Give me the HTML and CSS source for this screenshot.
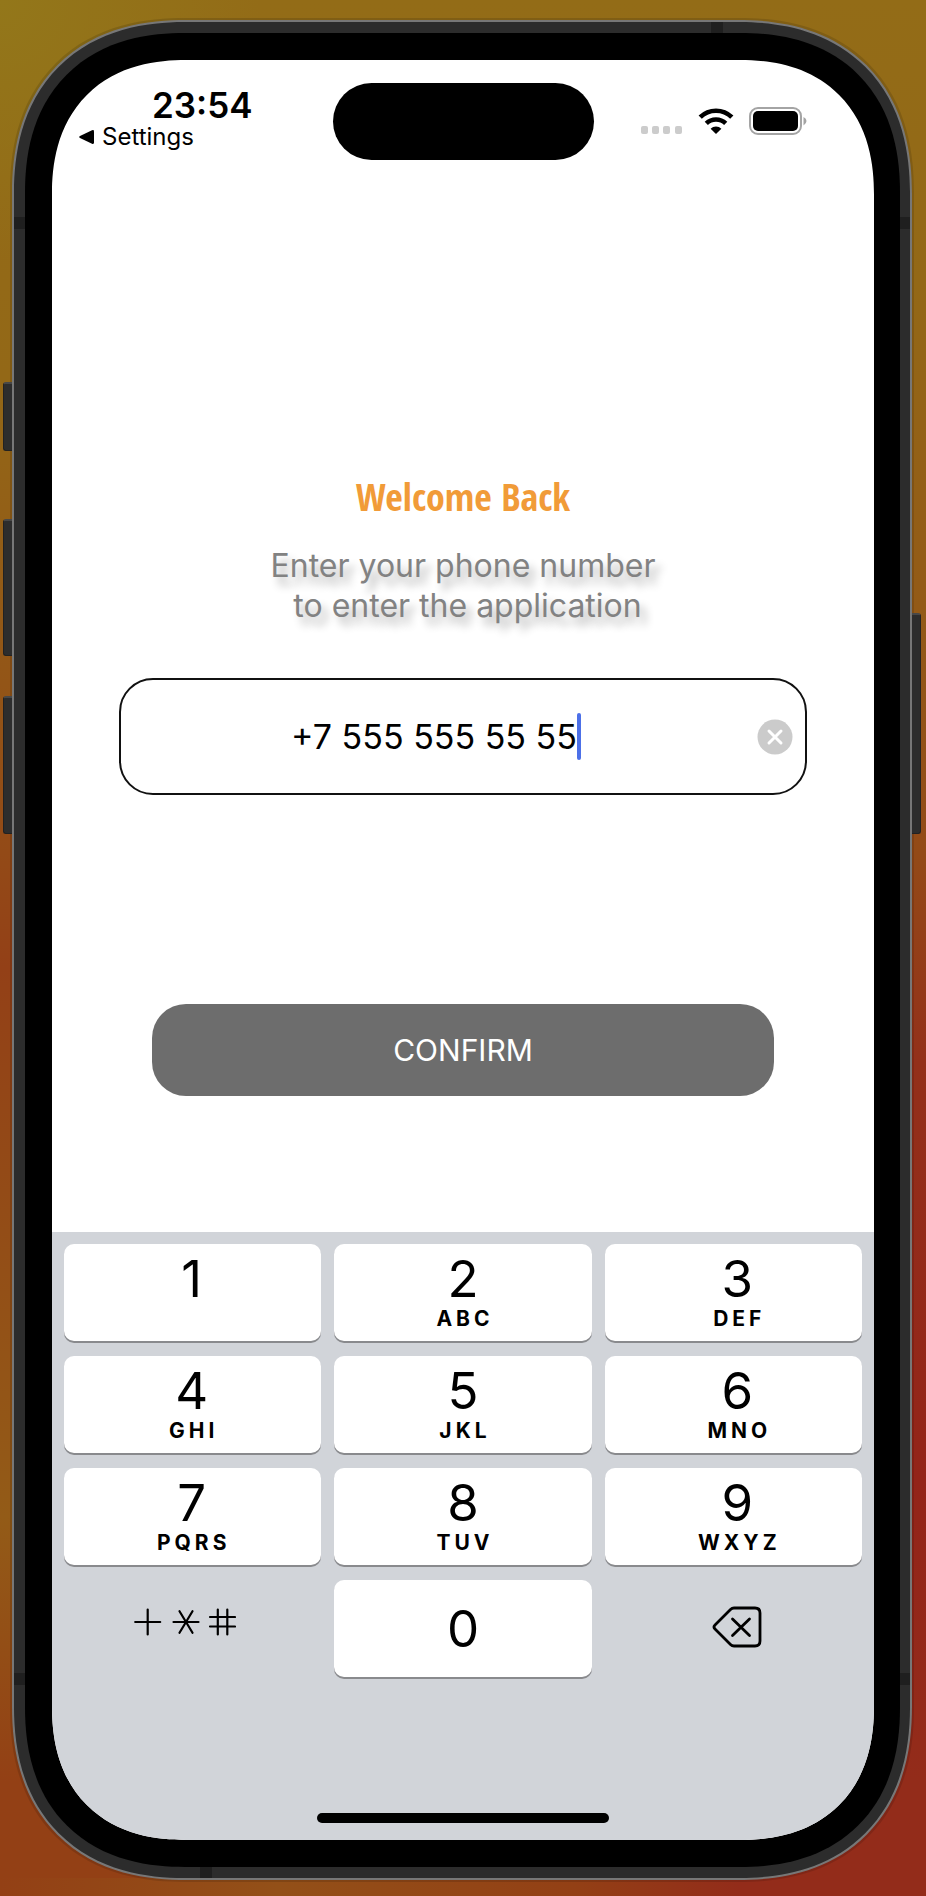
FILE: index.html
```html
<!DOCTYPE html>
<html lang="en">
<head>
<meta charset="utf-8">
<meta name="viewport" content="width=device-width, initial-scale=1">
<title>Welcome Back</title>
<link rel="stylesheet" href="styles.css">
</head>
<body>
<div class="phone">
  <span class="side side-mute"></span>
  <span class="side side-up"></span>
  <span class="side side-down"></span>
  <span class="side side-power"></span>
  <span class="seam seam-top"></span>
  <span class="seam seam-bottom"></span>
  <span class="seam seam-left-high"></span>
  <span class="seam seam-left-low"></span>
  <span class="seam seam-right-high"></span>
  <span class="seam seam-right-low"></span>
  <div class="bezel">
    <div class="screen">
      <header class="status">
        <div class="status-left">
          <time class="clock">23:54</time>
          <a class="back" href="#settings">
            <svg width="15" height="16" viewBox="0 0 15 16" aria-hidden="true"><path d="M13 1.2Q15 .4 15 2.4V13.6Q15 15.6 13 14.8L1 9Q-.6 8 1 7Z"/></svg>
            Settings
          </a>
        </div>
        <div class="island"></div>
        <div class="status-right">
          <svg class="dots" width="42" height="8" viewBox="0 0 42 8" aria-hidden="true"><g fill="#ccc"><rect width="7" height="8" rx="2"/><rect x="11" width="7" height="8" rx="2"/><rect x="22" width="7" height="8" rx="2"/><rect x="34" width="7" height="8" rx="2"/></g></svg>
          <svg width="36" height="28" viewBox="0 0 36 28" aria-hidden="true"><g fill="none" stroke="#000" stroke-width="4.6"><path d="M2.2 10.2A22.6 22.6 0 0 1 33.8 10.2"/><path d="M8.3 16.4A14 14 0 0 1 27.7 16.4"/></g><path d="M18 27 12.6 21.7A7.6 7.6 0 0 1 23.4 21.7Z"/></svg>
          <svg width="58" height="28" viewBox="0 0 58 28" aria-hidden="true"><rect x="1" y="1" width="51" height="26" rx="8" fill="none" stroke="#a4a4a4" stroke-width="2"/><rect x="4" y="4" width="45" height="20" rx="5"/><path d="M54.500 10Q57.500 11.500 57.500 14T54.500 18.500Z" fill="#a4a4a4"/></svg>
        </div>
      </header>
      <main class="login">
        <h1 class="title">Welcome Back</h1>
        <p class="hint">Enter your phone number<br>&nbsp;to enter the application</p>
        <form class="form">
          <div class="field">
            <input class="phone-input" type="tel" aria-label="Phone number" value="+7 555 555 55 55">
            <span class="caret"></span>
            <button class="clear" type="button" aria-label="Clear">
              <svg width="36" height="36" viewBox="0 0 36 36" aria-hidden="true"><circle cx="18" cy="18" r="17.500" fill="#cbcbcb"/><path d="M12 12 24 24M24 12 12 24" stroke="#fff" stroke-width="3" stroke-linecap="round"/></svg>
            </button>
          </div>
          <button class="confirm" type="button">CONFIRM</button>
        </form>
      </main>
      <section class="keyboard" aria-label="Keypad">
        <div class="keys">
          <button class="key" type="button">1<span class="letters">&nbsp;</span></button>
          <button class="key" type="button">2<span class="letters">ABC</span></button>
          <button class="key" type="button">3<span class="letters">DEF</span></button>
          <button class="key" type="button">4<span class="letters">GHI</span></button>
          <button class="key" type="button">5<span class="letters">JKL</span></button>
          <button class="key" type="button">6<span class="letters">MNO</span></button>
          <button class="key" type="button">7<span class="letters">PQRS</span></button>
          <button class="key" type="button">8<span class="letters">TUV</span></button>
          <button class="key" type="button">9<span class="letters">WXYZ</span></button>
          <button class="key key-plain key-symbols" type="button" aria-label="Symbols">
            <svg width="102" height="28" viewBox="0 0 102 28" aria-hidden="true"><g fill="none" stroke="#000" stroke-width="2.200" stroke-linecap="round"><path d="M1.200 14H26.200M13.700 1.500V26.500"/><path d="M39.500 14H64.500M45.500 3.200 58.500 24.800M58.500 3.200 45.500 24.800"/><path d="M76 9H101M76 18.500H101M83.800 1.500V26.500M93.300 1.500V26.500"/></g></svg>
          </button>
          <button class="key" type="button">0</button>
          <button class="key key-plain key-delete" type="button" aria-label="Delete">
            <svg width="50" height="42" viewBox="0 0 50 42" aria-hidden="true"><g fill="none" stroke="#000" stroke-width="2.800" stroke-linecap="round" stroke-linejoin="round"><path d="M22 2H43Q48 2 48 7V35Q48 40 43 40H22Q20 40 18.500 38.500L3 23Q1 21 3 19L18.500 3.500Q20 2 22 2Z"/><path d="M20.500 13 37.500 29.500M37.500 13 20.500 29.500"/></g></svg>
          </button>
        </div>
        <span class="home-bar"></span>
      </section>
    </div>
  </div>
</div>
</body>
</html>
```
FILE: styles.css
```css
* {
  box-sizing: border-box;
}

body {
  margin: 0;
  min-height: 100vh;
  display: flex;
  padding: 20px 14px 16px 12px;
  font-family: Inter, "Liberation Sans", sans-serif;
  color: #000;
  background:
    linear-gradient(90deg, #934015 0, #935018 30%, #934015 62%, #932c1a 80%) left bottom / 100% 18px no-repeat,
    radial-gradient(circle at 0 0, #93771a 0, rgba(147, 119, 26, 0) 260px) left top / 100% 300px no-repeat,
    linear-gradient(180deg, #936c17 0, #936817 20%, #935a17 32%, #934a17 45%, #934017 51%, #935b17 80%, #934015 94%) left top / 50% 100% no-repeat,
    linear-gradient(180deg, #936c17 0, #936817 15%, #935a17 32%, #934a17 45%, #93301a 56%, #932419 78%, #932c1a 94%) right top / 50% 100% no-repeat;
}

button,
input {
  font: inherit;
  color: inherit;
  margin: 0;
  padding: 0;
  border: 0;
  background: none;
}

.phone {
  position: relative;
  flex: 1;
  display: flex;
  padding: 11px 10px 11px 11px;
  border: 2px solid #777;
  border-radius: 156px;
  background: #2c2c2c;
  box-shadow: 0 0 0 2px rgba(0, 0, 0, 0.13);
}

.side {
  position: absolute;
  left: -11px;
  width: 9px;
  border: 1px solid #222;
  border-right: 0;
  border-top: 2px solid #484848;
  border-radius: 3px 0 0 3px;
  background: #2d2d2d;
}

.side-mute {
  top: 360px;
  height: 69px;
}

.side-up {
  top: 497px;
  height: 137px;
}

.side-down {
  top: 674px;
  height: 138px;
}

.side-power {
  left: auto;
  right: -11px;
  top: 591px;
  height: 221px;
  transform: scaleX(-1);
}

.seam {
  position: absolute;
  width: 11px;
  height: 12px;
  background: #1f1f1f;
}

.seam-top {
  top: 0;
  right: 187px;
  width: 12px;
}

.seam-bottom {
  bottom: 0;
  left: 186px;
  width: 12px;
}

.seam-left-high {
  left: 0;
  top: 195px;
}

.seam-left-low {
  left: 0;
  bottom: 193px;
}

.seam-right-high {
  right: 0;
  top: 195px;
}

.seam-right-low {
  right: 0;
  bottom: 193px;
}

.bezel {
  position: relative;
  flex: 1;
  display: flex;
  padding: 27px 26px 27px 27px;
  border-radius: 143px;
  background: #000;
}

.screen {
  flex: 1;
  min-width: 0;
  display: flex;
  flex-direction: column;
  overflow: hidden;
  border-radius: 118px;
  background: #fff;
}

@supports (corner-shape: superellipse(1.2)) {
  .phone,
  .bezel,
  .screen {
    corner-shape: superellipse(1.2);
  }

  .phone {
    border-radius: 174px;
  }

  .bezel {
    border-radius: 160px;
  }

  .screen {
    border-radius: 134px;
  }
}

.status {
  display: grid;
  grid-template-columns: 1fr 261px 1fr;
  padding-top: 23px;
}

.status-left {
  display: flex;
  flex-direction: column;
  align-items: flex-start;
  padding: 4px 0 0 27px;
}

.clock {
  margin-left: 73px;
  font-size: 35px;
  line-height: 36px;
  font-weight: 600;
}

.back {
  display: flex;
  align-items: center;
  gap: 8px;
  color: inherit;
  font-size: 24px;
  line-height: 28px;
  font-weight: 400;
  text-decoration: none;
}

.island {
  height: 77px;
  border-radius: 39px;
  background: #000;
}

.status-right {
  display: flex;
  align-items: center;
  justify-content: flex-end;
  gap: 15px;
  height: 75px;
  padding-right: 67px;
}

.dots {
  margin-top: 18px;
}

.login {
  flex: 1;
  display: flex;
  flex-direction: column;
  align-items: stretch;
  padding-top: 310px;
}

.title {
  margin: 0;
  color: #f19b38;
  font-family: "Open Sans Condensed", "Open Sans", sans-serif;
  font-size: 38px;
  line-height: 52px;
  font-weight: 900;
  text-align: center;
}

.hint {
  margin: 24px 0 0;
  color: #828282;
  font-size: 32px;
  line-height: 40px;
  text-align: center;
  text-shadow: 6px 8px 8px rgba(0, 0, 0, 0.3);
}

.form {
  display: flex;
  flex-direction: column;
  padding: 52px 67px 0;
}

.field {
  position: relative;
  display: flex;
  height: 117px;
  border: 2px solid #111;
  border-radius: 34px;
}

.phone-input {
  flex: 1;
  min-width: 0;
  padding: 0 78px 0 20px;
  font-size: 34px;
  text-align: center;
  outline: none;
}

.caret {
  position: absolute;
  left: calc(50% + 114px);
  top: 33px;
  width: 4px;
  height: 47px;
  border-radius: 2px;
  background: #4c70e8;
}

.clear {
  position: absolute;
  right: 12px;
  top: 39px;
  display: flex;
}

.confirm {
  height: 92px;
  margin: 209px 33px 0;
  border-radius: 34px;
  background: #6d6d6d;
  color: #fff;
  font-size: 30px;
}

.keyboard {
  display: flex;
  flex-direction: column;
  gap: 136px;
  padding: 12px 12px 17px;
  background: #d1d4d9;
}

.keys {
  display: grid;
  grid-template-columns: repeat(3, 1fr);
  grid-auto-rows: 97px;
  gap: 15px 13px;
}

.key {
  display: flex;
  flex-direction: column;
  align-items: center;
  justify-content: center;
  border-radius: 10px;
  background: #fff;
  box-shadow: 0 2px 0 #898a8d;
  font-size: 51px;
  line-height: 52px;
}

.key:nth-child(3n + 1) {
  padding-right: 2px;
}

.key:nth-child(3n) {
  padding-left: 8px;
}

.letters {
  padding-left: 4px;
  font-size: 21px;
  line-height: 28px;
  font-weight: 700;
  letter-spacing: 4px;
}

.key-plain {
  background: none;
  box-shadow: none;
}

.key.key-symbols {
  padding: 0 16px 14px 0;
}

.key-delete {
  padding-bottom: 4px;
}

.home-bar {
  align-self: center;
  width: 292px;
  height: 10px;
  border-radius: 5px;
  background: #000;
}
```
